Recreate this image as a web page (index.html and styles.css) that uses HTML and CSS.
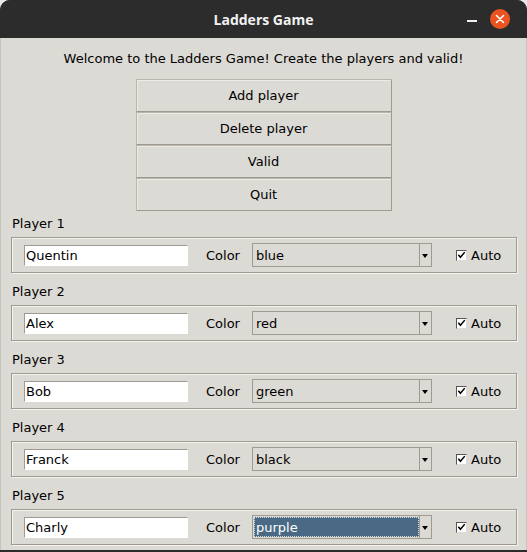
FILE: index.html
```html
<!DOCTYPE html>
<html>
<head>
<meta charset="utf-8">
<link rel="stylesheet" href="styles.css">
</head>
<body>
<div class="window">
  <div class="titlebar">
    <span class="title">Ladders Game</span>
    <span class="minimize"></span>
    <span class="close">
      <svg width="20" height="20" viewBox="0 0 20 20"><circle cx="10" cy="10" r="10" fill="#e95420"/><path d="M6.5 6.5 L13.5 13.5 M13.5 6.5 L6.5 13.5" stroke="#fff" stroke-width="1.6" stroke-linecap="round"/></svg>
    </span>
  </div>
  <div class="content">
    <p class="welcome">Welcome to the Ladders Game! Create the players and valid!</p>
    <div class="buttons">
      <div class="btn">Add player</div>
      <div class="btn">Delete player</div>
      <div class="btn">Valid</div>
      <div class="btn">Quit</div>
    </div>

    <div class="player">
      <div class="plabel">Player 1</div>
      <div class="pframe">
        <div class="entry">Quentin</div>
        <span class="clabel">Color</span>
        <div class="combo"><span class="cval">blue</span><span class="arrow"></span></div>
        <span class="check"><span class="box"><svg width="10" height="10" viewBox="0 0 10 10"><path d="M1.5 4.8 L3.8 7.5 L8.6 1.8" fill="none" stroke="#000" stroke-width="1.7"/></svg></span>Auto</span>
      </div>
    </div>

    <div class="player">
      <div class="plabel">Player 2</div>
      <div class="pframe">
        <div class="entry">Alex</div>
        <span class="clabel">Color</span>
        <div class="combo"><span class="cval">red</span><span class="arrow"></span></div>
        <span class="check"><span class="box"><svg width="10" height="10" viewBox="0 0 10 10"><path d="M1.5 4.8 L3.8 7.5 L8.6 1.8" fill="none" stroke="#000" stroke-width="1.7"/></svg></span>Auto</span>
      </div>
    </div>

    <div class="player">
      <div class="plabel">Player 3</div>
      <div class="pframe">
        <div class="entry">Bob</div>
        <span class="clabel">Color</span>
        <div class="combo"><span class="cval">green</span><span class="arrow"></span></div>
        <span class="check"><span class="box"><svg width="10" height="10" viewBox="0 0 10 10"><path d="M1.5 4.8 L3.8 7.5 L8.6 1.8" fill="none" stroke="#000" stroke-width="1.7"/></svg></span>Auto</span>
      </div>
    </div>

    <div class="player">
      <div class="plabel">Player 4</div>
      <div class="pframe">
        <div class="entry">Franck</div>
        <span class="clabel">Color</span>
        <div class="combo"><span class="cval">black</span><span class="arrow"></span></div>
        <span class="check"><span class="box"><svg width="10" height="10" viewBox="0 0 10 10"><path d="M1.5 4.8 L3.8 7.5 L8.6 1.8" fill="none" stroke="#000" stroke-width="1.7"/></svg></span>Auto</span>
      </div>
    </div>

    <div class="player">
      <div class="plabel">Player 5</div>
      <div class="pframe">
        <div class="entry">Charly</div>
        <span class="clabel">Color</span>
        <div class="combo"><span class="cval selected">purple</span><span class="arrow"></span></div>
        <span class="check"><span class="box"><svg width="10" height="10" viewBox="0 0 10 10"><path d="M1.5 4.8 L3.8 7.5 L8.6 1.8" fill="none" stroke="#000" stroke-width="1.7"/></svg></span>Auto</span>
      </div>
    </div>
  </div>
</div>
</body>
</html>
```

FILE: styles.css
```css
html, body {
  margin: 0;
  padding: 0;
  background: #e9e9e9;
}
body {
  width: 527px;
  height: 552px;
  overflow: hidden;
  font-family: "DejaVu Sans", sans-serif;
  font-size: 13px;
  color: #000;
}
.window {
  width: 527px;
  height: 552px;
  display: flex;
  flex-direction: column;
  border-radius: 10px 10px 0 0;
  overflow: hidden;
  background: #2c2c2c;
}
.titlebar {
  height: 38px;
  flex: none;
  background: #2c2c2c;
  position: relative;
  display: flex;
  align-items: center;
  justify-content: center;
}
.title {
  color: #f2f2f2;
  font-family: "Open Sans", "DejaVu Sans", sans-serif;
  font-weight: 700;
  font-size: 14px;
  padding-top: 1px;
}
.minimize {
  position: absolute;
  left: 467px;
  top: 20px;
  width: 10px;
  height: 1.5px;
  background: #f0f0f0;
}
.close {
  position: absolute;
  left: 490px;
  top: 9px;
  width: 20px;
  height: 20px;
  display: block;
}
.close svg { display: block; }
.content {
  flex: none;
  height: 512px;
  background: #dcdad5;
  border-left: 1px solid #c4c3bf;
  border-right: 1px solid #c4c3bf;
  box-sizing: border-box;
  padding: 12px 10px 0 10px;
}
.welcome {
  margin: 0;
  text-align: center;
  line-height: 18px;
  height: 18px;
  font-size: 13px;
}
.buttons {
  margin: 11px auto 0;
  width: 256px;
  display: flex;
  flex-direction: column;
}
.btn {
  height: 33px;
  box-sizing: border-box;
  border: 1px solid #9e9a91;
  border-top-color: #bab5ab;
  border-left-color: #bab5ab;
  box-shadow: inset 1px 1px 0 #eeebe7;
  background: #dcdad5;
  display: flex;
  align-items: center;
  justify-content: center;
}
.player {
  margin-top: 4px;
  display: flex;
  flex-direction: column;
}
.player + .player {
  margin-top: 10px;
}
.plabel {
  height: 18px;
  line-height: 18px;
  padding-left: 1px;
}
.pframe {
  margin-top: 4px;
  height: 36px;
  width: 506px;
  box-sizing: border-box;
  border: 1px solid #9e9a91;
  box-shadow: inset 1px 1px 0 #f4f3f0, 1px 1px 0 #f4f3f0;
  display: flex;
  align-items: center;
  padding-left: 12px;
}
.entry {
  width: 164px;
  height: 21px;
  box-sizing: border-box;
  background: #fff;
  border: 1px solid #fff;
  border-top-color: #9e9a91;
  border-left-color: #9e9a91;
  padding-left: 1px;
  line-height: 19px;
}
.clabel {
  margin-left: 18px;
  width: 46px;
}
.combo {
  width: 180px;
  height: 24px;
  box-sizing: border-box;
  border: 1px solid #9e9a91;
  display: flex;
  align-items: stretch;
  background: #dcdad5;
}
.cval {
  flex: 1;
  margin: 1px;
  padding-left: 2px;
  line-height: 21px;
}
.cval.selected {
  background: #4a6984;
  color: #fff;
  border: 1px dotted #dcdad5;
  margin: 1px 0 1px 1px;
  line-height: 19px;
  padding-left: 1px;
}
.arrow {
  width: 11px;
  border-left: 1px solid #9e9a91;
  position: relative;
}
.arrow::after {
  content: "";
  position: absolute;
  left: 2px;
  top: 10px;
  border-left: 3.5px solid transparent;
  border-right: 3.5px solid transparent;
  border-top: 4px solid #000;
}
.check {
  margin-left: 24px;
  display: flex;
  align-items: center;
}
.box {
  width: 11px;
  height: 11px;
  box-sizing: border-box;
  background: #fff;
  border: 1px solid #555;
  border-right-color: #ddd;
  border-bottom-color: #ddd;
  margin-right: 4px;
  display: flex;
  align-items: center;
  justify-content: center;
}
.box svg { display: block; }
```
